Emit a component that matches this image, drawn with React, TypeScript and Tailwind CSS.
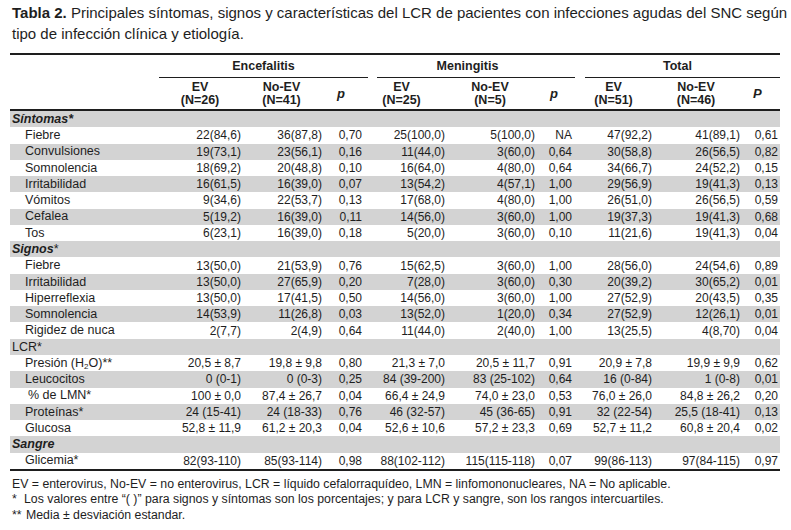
import React from "react";

type Row = { label: React.ReactNode; v: string[]; indent?: string };
type Section = { title: React.ReactNode; rows: Row[] };

const sections: Section[] = [
  {
    title: <span className="font-bold italic">Síntomas*</span>,
    rows: [
      { label: "Fiebre", v: ["22(84,6)", "36(87,8)", "0,70", "25(100,0)", "5(100,0)", "NA", "47(92,2)", "41(89,1)", "0,61"] },
      { label: "Convulsiones", v: ["19(73,1)", "23(56,1)", "0,16", "11(44,0)", "3(60,0)", "0,64", "30(58,8)", "26(56,5)", "0,82"] },
      { label: "Somnolencia", v: ["18(69,2)", "20(48,8)", "0,10", "16(64,0)", "4(80,0)", "0,64", "34(66,7)", "24(52,2)", "0,15"] },
      { label: "Irritabilidad", v: ["16(61,5)", "16(39,0)", "0,07", "13(54,2)", "4(57,1)", "1,00", "29(56,9)", "19(41,3)", "0,13"] },
      { label: "Vómitos", v: ["9(34,6)", "22(53,7)", "0,13", "17(68,0)", "4(80,0)", "1,00", "26(51,0)", "26(56,5)", "0,59"] },
      { label: "Cefalea", v: ["5(19,2)", "16(39,0)", "0,11", "14(56,0)", "3(60,0)", "1,00", "19(37,3)", "19(41,3)", "0,68"] },
      { label: "Tos", v: ["6(23,1)", "16(39,0)", "0,18", "5(20,0)", "3(60,0)", "0,10", "11(21,6)", "19(41,3)", "0,04"] },
    ],
  },
  {
    title: (
      <>
        <span className="font-bold italic">Signos</span>*
      </>
    ),
    rows: [
      { label: "Fiebre", v: ["13(50,0)", "21(53,9)", "0,76", "15(62,5)", "3(60,0)", "1,00", "28(56,0)", "24(54,6)", "0,89"] },
      { label: "Irritabilidad", v: ["13(50,0)", "27(65,9)", "0,20", "7(28,0)", "3(60,0)", "0,30", "20(39,2)", "30(65,2)", "0,01"] },
      { label: "Hiperreflexia", v: ["13(50,0)", "17(41,5)", "0,50", "14(56,0)", "3(60,0)", "1,00", "27(52,9)", "20(43,5)", "0,35"] },
      { label: "Somnolencia", v: ["14(53,9)", "11(26,8)", "0,03", "13(52,0)", "1(20,0)", "0,34", "27(52,9)", "12(26,1)", "0,01"] },
      { label: "Rigidez de nuca", v: ["2(7,7)", "2(4,9)", "0,64", "11(44,0)", "2(40,0)", "1,00", "13(25,5)", "4(8,70)", "0,04"] },
    ],
  },
  {
    title: <span>LCR*</span>,
    rows: [
      {
        label: (
          <>
            Presión (H<sub className="text-[8px]">2</sub>O)**
          </>
        ),
        v: ["20,5 ± 8,7", "19,8 ± 9,8", "0,80", "21,3 ± 7,0", "20,5 ± 11,7", "0,91", "20,9 ± 7,8", "19,9 ± 9,9", "0,62"],
      },
      { label: "Leucocitos", v: ["0 (0-1)", "0 (0-3)", "0,25", "84 (39-200)", "83 (25-102)", "0,64", "16 (0-84)", "1 (0-8)", "0,01"] },
      { label: "% de LMN*", indent: "pl-[18px]", v: ["100 ± 0,0", "87,4 ± 26,7", "0,04", "66,4 ± 24,9", "74,0 ± 23,0", "0,53", "76,0 ± 26,0", "84,8 ± 26,2", "0,20"] },
      { label: "Proteínas*", v: ["24 (15-41)", "24 (18-33)", "0,76", "46 (32-57)", "45 (36-65)", "0,91", "32 (22-54)", "25,5 (18-41)", "0,13"] },
      { label: "Glucosa", v: ["52,8 ± 11,9", "61,2 ± 20,3", "0,04", "52,6 ± 10,6", "57,2 ± 23,3", "0,69", "52,7 ± 11,2", "60,8 ± 20,4", "0,02"] },
    ],
  },
  {
    title: <span className="font-bold italic">Sangre</span>,
    rows: [
      { label: "Glicemia*", v: ["82(93-110)", "85(93-114)", "0,98", "88(102-112)", "115(115-118)", "0,07", "99(86-113)", "97(84-115)", "0,97"] },
    ],
  },
];

// widths of the value columns, left to right
const cols = ["w-[82px]", "w-[81px]", "w-[46px]", "w-[77px]", "w-[90px]", "w-[40px]", "w-[77px]", "w-[88px]", "w-[40px]"];
const pad = ["", "", "pr-[6px]", "", "", "pr-[3px]", "", "", "pr-[2px]"];

const DataRow = ({ row, gray }: { row: Row; gray: boolean }) => (
  <div className={`flex h-[16.27px] items-center ${gray ? "bg-[#d3d3d3]" : ""}`}>
    <div className={`w-[149px] text-[12.5px] whitespace-nowrap ${row.indent ?? "pl-[15px]"}`}>{row.label}</div>
    {row.v.map((val, i) => (
      <div key={i} className={`${cols[i]} ${pad[i]} text-right whitespace-nowrap`}>
        {val}
      </div>
    ))}
  </div>
);

const SubHead = ({ a, b }: { a: string; b: string }) => (
  <div className="flex flex-col items-center leading-[12.5px]">
    <span>{a}</span>
    <span>{b}</span>
  </div>
);

export default function App() {
  let idx = 0;
  return (
    <div className="w-[791px] h-[530px] bg-white text-[#1e1e1e] font-['Liberation_Sans',Arial,sans-serif] px-[10px] pt-[2px]">
      <p className="text-[15px] leading-[21px] pl-[2px] whitespace-nowrap">
        <span className="font-bold">Tabla 2.</span> Principales síntomas, signos y características del LCR de pacientes con infecciones agudas del SNC según
        <br />
        tipo de infección clínica y etiología.
      </p>

      <div className="mt-[9px] w-[770px] text-[12px] leading-none">
        <div className="h-[2px] bg-[#1e1e1e]" />
        {/* group headers */}
        <div className="flex h-[22px] items-center font-bold text-[12.5px]">
          <div className="w-[149px]" />
          <div className="w-[209px] text-center">Encefalitis</div>
          <div className="w-[207px] text-center pr-[8px]">Meningitis</div>
          <div className="w-[205px] text-center">Total</div>
        </div>
        <div className="flex h-[1px]">
          <div className="w-[149px]" />
          <div className="w-[209px] bg-[#1e1e1e]" />
          <div className="w-[207px] pl-[9px]">
            <div className="h-[1px] bg-[#1e1e1e]" />
          </div>
          <div className="w-[205px] pl-[10px]">
            <div className="h-[1px] bg-[#1e1e1e]" />
          </div>
        </div>
        {/* sub headers */}
        <div className="flex h-[31px] items-center font-bold text-[12.5px]">
          <div className="w-[149px]" />
          <div className="w-[82px]"><SubHead a="EV" b="(N=26)" /></div>
          <div className="w-[81px]"><SubHead a="No-EV" b="(N=41)" /></div>
          <div className="w-[46px] pl-[15px] italic text-[13px]">p</div>
          <div className="w-[77px] pr-[10px]"><SubHead a="EV" b="(N=25)" /></div>
          <div className="w-[90px]"><SubHead a="No-EV" b="(N=5)" /></div>
          <div className="w-[40px] pl-[15px] italic text-[13px]">p</div>
          <div className="w-[77px]"><SubHead a="EV" b="(N=51)" /></div>
          <div className="w-[88px]"><SubHead a="No-EV" b="(N=46)" /></div>
          <div className="w-[40px] pl-[13px] italic text-[13px]">P</div>
        </div>
        <div className="h-[2px] bg-[#1e1e1e]" />

        {sections.map((s, si) => {
          const headGray = idx++ % 2 === 0;
          return (
            <div key={si}>
              <div className={`flex h-[16.27px] items-center pl-[2px] text-[12.5px] ${headGray ? "bg-[#d3d3d3]" : ""}`}>{s.title}</div>
              {s.rows.map((r, ri) => {
                const g = idx++ % 2 === 0;
                return <DataRow key={ri} row={r} gray={g} />;
              })}
            </div>
          );
        })}
        <div className="h-[2px] bg-[#1e1e1e]" />
      </div>

      <div className="mt-[6px] pl-[2px] text-[12.3px] leading-[15.5px]">
        <p>EV = enterovirus, No-EV = no enterovirus, LCR = líquido cefalorraquídeo, LMN = linfomononucleares, NA = No aplicable.</p>
        <p className="flex">
          <span className="w-[12px]">*</span>
          <span>Los valores entre “( )” para signos y síntomas son los porcentajes; y para LCR y sangre, son los rangos intercuartiles.</span>
        </p>
        <p className="flex">
          <span className="w-[14px]">**</span>
          <span>Media ± desviación estandar.</span>
        </p>
      </div>
    </div>
  );
}
